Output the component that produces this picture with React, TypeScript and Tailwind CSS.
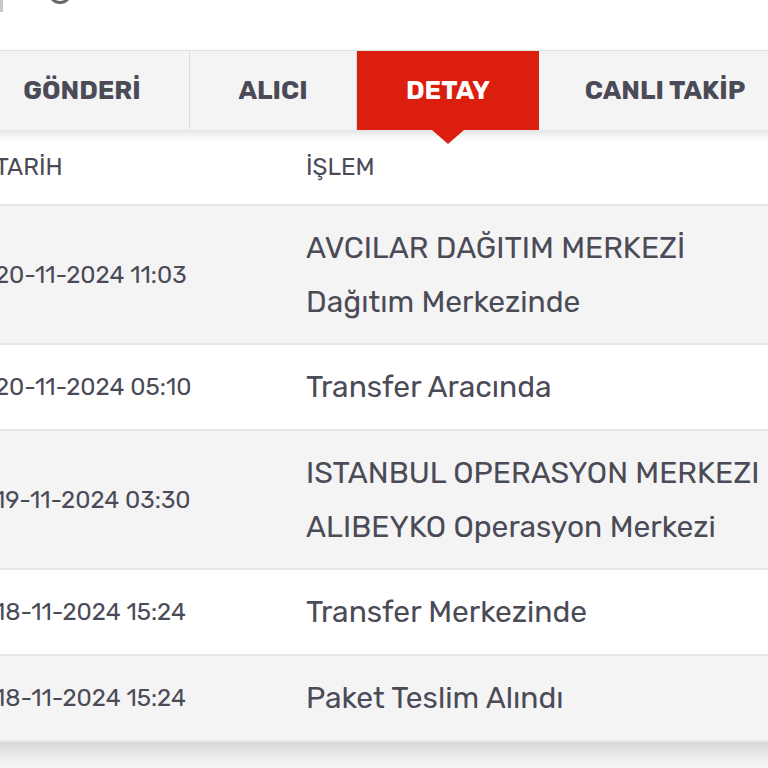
import React from "react";

const tabs = [
  { label: "GÖNDERİ", active: false, w: "w-[215px]" },
  { label: "ALICI", active: false, w: "w-[167px]" },
  { label: "DETAY", active: true, w: "w-[182px]" },
  { label: "CANLI TAKİP", active: false, w: "w-[252px]" },
];

const rows = [
  { date: "20-11-2024 11:03", lines: ["AVCILAR DAĞITIM MERKEZİ", "Dağıtım Merkezinde"], gray: true },
  { date: "20-11-2024 05:10", lines: ["Transfer Aracında"], gray: false },
  { date: "19-11-2024 03:30", lines: ["ISTANBUL OPERASYON MERKEZI", "ALIBEYKO Operasyon Merkezi"], gray: true },
  { date: "18-11-2024 15:24", lines: ["Transfer Merkezinde"], gray: false },
  { date: "18-11-2024 15:24", lines: ["Paket Teslim Alındı"], gray: true },
];

export default function App() {
  return (
    <div className="w-[768px] h-[768px] overflow-hidden bg-[#f4f4f4] font-['Rubik','Noto_Sans',sans-serif] text-[#4a4b57]">
      <div className="-ml-[25px] w-[840px]">
        {/* top header remnant */}
        <div className="h-[50px] bg-white flex items-start">
          <div className="ml-[25px] w-[3px] h-[12px] bg-[#c8c8c8]"></div>
          <div className="ml-[45px] -mt-[22px] w-[24px] h-[26px] rounded-full border-[3px] border-[#666]"></div>
        </div>

        {/* Tabs */}
        <div className="relative z-10 flex h-[80px] bg-[#f4f4f5] border-t border-[#e2e2e4] shadow-[0_4px_8px_rgba(0,0,0,0.12)]">
          {tabs.map((t, i) => (
            <div
              key={i}
              className={
                t.w +
                (t.active
                  ? " relative flex shrink-0 items-center justify-center bg-[#dc1e0e] text-white text-[26px] font-bold"
                  : " flex shrink-0 items-center justify-center text-[26px] font-bold border-r border-[#dedee0] last:border-r-0")
              }
            >
              {t.label}
              {t.active && (
                <div className="absolute left-1/2 top-full -translate-x-1/2 w-0 h-0 border-l-[16px] border-r-[16px] border-t-[14px] border-l-transparent border-r-transparent border-t-[#dc1e0e]"></div>
              )}
            </div>
          ))}
        </div>

        {/* Table */}
        <div className="bg-white shadow-[0_10px_14px_rgba(0,0,0,0.12)]">
          <div className="flex items-center h-[76px] border-b-2 border-[#e6e6e6] text-[24px]">
            <div className="w-[331px] pl-[20px]">TARİH</div>
            <div>İŞLEM</div>
          </div>
          {rows.map((r, i) => (
            <div
              key={i}
              className={
                "flex items-center border-b-2 border-[#e6e6e6] " +
                (r.gray ? "bg-[#f4f4f4] " : "bg-white ") +
                (r.lines.length > 1 ? "h-[139px]" : "h-[86px]")
              }
            >
              <div className="w-[331px] pl-[20px] text-[24px]">{r.date}</div>
              <div className="text-[30px] leading-[54px]">
                {r.lines.map((l, j) => (
                  <div key={j}>{l}</div>
                ))}
              </div>
            </div>
          ))}
        </div>
      </div>
    </div>
  );
}
